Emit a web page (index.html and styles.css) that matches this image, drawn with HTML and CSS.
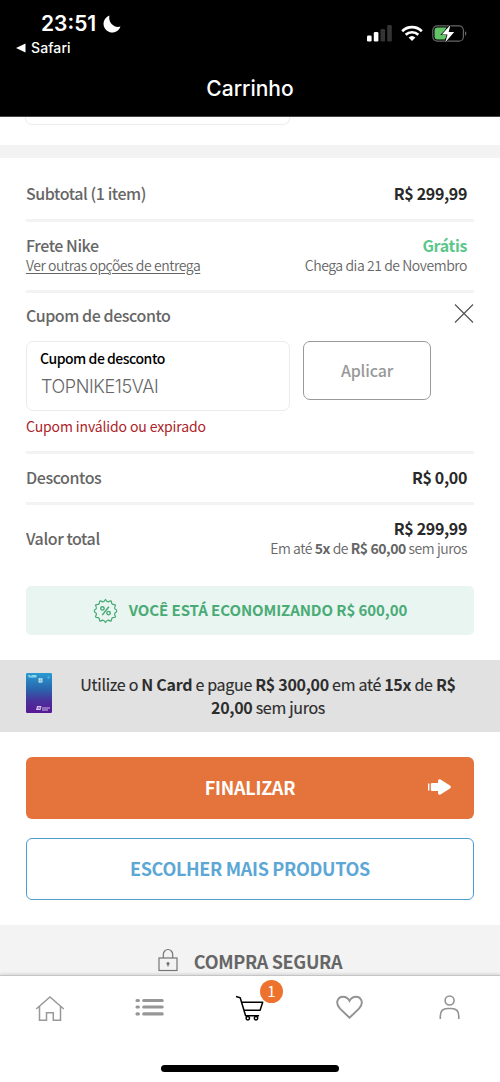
FILE: index.html
```html
<!DOCTYPE html>
<html lang="pt-BR">
<head>
<meta charset="utf-8">
<title>Carrinho</title>
<link rel="stylesheet" href="styles.css">
</head>
<body>
<div class="app">
  <header class="header">
    <div class="status">
      <div class="status-left">
        <div class="clock"><span class="time">23:51</span>
          <svg class="moon" width="18" height="18" viewBox="0 0 18 18"><path d="M6.500.5A8.700 8.700 0 1 0 17.500 11.500C11.500 13.500 4.800 8 6.500.5Z" fill="#fff"/></svg>
        </div>
        <div class="back"><svg width="10" height="10" viewBox="0 0 10 10"><path d="M0 5 9.500.5v9Z" fill="#fff"/></svg><span class="safari">Safari</span></div>
      </div>
      <div class="status-right">
        <svg width="26" height="17" viewBox="0 0 26 17"><g fill="#fff"><rect x="0" y="10.500" width="4.600" height="6" rx="1.300"/><rect x="6.800" y="7" width="4.600" height="9.500" rx="1.300"/></g><g fill="#343434"><rect x="13.500" y="4" width="4.600" height="12.500" rx="1.300"/><rect x="20.200" y="0" width="4.600" height="16.500" rx="1.300"/></g></svg>
        <svg class="wifi" width="22" height="17" viewBox="0 0 22 17" fill="none" stroke="#fff" stroke-width="2.700"><path d="M1.200 6.200a14 14 0 0 1 19.600 0"/><path d="M4.700 9.800a9 9 0 0 1 12.600 0"/><path d="M7.600 12.600a5 5 0 0 1 6.800 0L11 16Z" fill="#fff" stroke="none"/></svg>
        <svg class="battery" width="36" height="18" viewBox="0 0 36 18"><rect x=".8" y=".8" width="30.600" height="15.400" rx="4.500" fill="none" stroke="#666" stroke-width="1.200"/><path d="M5.500 2.500h9l-3 6.500h4L13 14.500H5.500a3 3 0 0 1-3-3v-6a3 3 0 0 1 3-3Z" fill="#62c466"/><path d="M33 6q2.800 2.500 0 5Z" fill="#666"/><path d="M18.400 0 9.800 9.500h5.700l-2.300 8 9-10.500h-5.500Z" fill="#fff" stroke="#000" stroke-width="1.200" paint-order="stroke"/></svg>
      </div>
    </div>
    <h1 class="title"><span>Carrinho</span></h1>
  </header>

  <main class="content">
    <div class="previous"><div class="previous-field"></div></div>
    <div class="band"></div>
    <section class="summary">
      <div class="row subtotal"><span class="label">Subtotal (1 item)</span><span class="price">R$ 299,99</span></div>
      <div class="row shipping">
        <div class="stack"><span class="label">Frete Nike</span><a class="small link">Ver outras opções de entrega</a></div>
        <div class="stack end"><span class="price free">Grátis</span><span class="small">Chega dia 21 de Novembro</span></div>
      </div>
      <div class="coupon">
        <div class="coupon-head"><span class="label">Cupom de desconto</span>
          <svg width="20" height="20" viewBox="0 0 20 20" stroke="#505050" stroke-width="1.100"><path d="m1 1.500 18 18M19 1.500 1 19.500"/></svg></div>
        <div class="coupon-form">
          <div class="field"><span class="field-label">Cupom de desconto</span><span class="field-value">TOPNIKE15VAI</span></div>
          <div class="apply"><span>Aplicar</span></div>
        </div>
        <div class="error"><span>Cupom inválido ou expirado</span></div>
      </div>
      <div class="row discounts"><span class="label">Descontos</span><span class="price">R$ 0,00</span></div>
      <div class="row total">
        <span class="label">Valor total</span>
        <div class="stack end"><span class="price">R$ 299,99</span><span class="small">Em até <b>5x</b> de <b>R$ 60,00</b> sem juros</span></div>
      </div>
      <div class="saving">
        <svg width="25" height="26" viewBox="0 0 26 26" fill="none" stroke="#4aab76" stroke-width="1.300" stroke-linejoin="round"><path d="M13 1 Q14.500 3.700 16 3.500 Q17.600 2.400 19 2.600 Q19.200 5.600 20.400 6.100 Q22.600 6 23.400 7 Q22 9.600 22.600 10.700 Q24.700 11.800 24.700 13 Q24.700 14.200 22.600 15.300 Q22 16.400 23.400 19 Q22.600 20 20.400 19.900 Q19.200 20.400 19 23.400 Q17.600 23.600 16 22.500 Q14.500 22.300 13 25 Q11.500 22.300 10 22.500 Q8.400 23.600 7 23.400 Q6.800 20.400 5.600 19.900 Q3.400 20 2.600 19 Q4 16.400 3.400 15.300 Q1.300 14.200 1.300 13 Q1.300 11.800 3.400 10.700 Q4 9.600 2.600 7 Q3.400 6 5.600 6.100 Q6.800 5.600 7 2.600 Q8.400 2.400 10 3.500 Q11.500 3.700 13 1Z"/><circle cx="9.800" cy="10.300" r="1.800" stroke-width="1.500"/><circle cx="16.200" cy="15.200" r="1.800" stroke-width="1.500"/><path d="M16.500 8.500 9.600 17.300" stroke-width="1.600"/></svg>
        <span class="saving-text">VOCÊ ESTÁ ECONOMIZANDO R$ 600,00</span>
      </div>
    </section>

    <section class="ncard">
      <svg width="26" height="40" viewBox="0 0 26 40"><defs><linearGradient id="card" x1="0" y1="0" x2="0" y2="1"><stop offset="0" stop-color="#299bd2"/><stop offset=".4" stop-color="#2866ad"/><stop offset=".7" stop-color="#49319b"/><stop offset="1" stop-color="#581795"/></linearGradient></defs><rect width="26" height="40" rx="1.200" fill="url(#card)"/><path d="M2 2h2l.7 1.600L6 2h4.500v2.500H3Z" fill="#8bd3eb"/><rect x="12.500" y="5" width="4" height="4.800" rx=".8" fill="#b9deea"/><path d="M14.500 5v4.800M12.500 7.400h4" stroke="#6bafcf" stroke-width=".5"/><path d="M22.500 3v3M21 4.500h3" stroke="#55b5de" stroke-width=".8"/><path d="m11 33-1 4h4.500l1-4Z" fill="#d5c5e8"/><path d="m12 36 .5-2 1 2 .5-2" stroke="#5a279b" stroke-width=".5" fill="none"/><path d="M16 35h8M16 37h6" stroke="#a786ca" stroke-width="1.300"/></svg>
      <p class="ncard-text"><span>Utilize o <b>N Card</b> e pague <b>R$ 300,00</b> em até <b>15x</b> de <b>R$</b></span><span><b>20,00</b> sem juros</span></p>
    </section>

    <div class="actions">
      <div class="button primary"><span class="finish">FINALIZAR</span>
        <svg class="arrow" width="24" height="16" viewBox="0 0 24 16" fill="#fff"><rect x="0" y="4.500" width="1.400" height="7"/><path d="M4 4h6V2Q10.200-.3 12.500.6L22 6.600q1.800 1.400 0 2.800l-9.500 6Q10.200 16.300 10 14v-2H4q-1.200 0-1.200-1.200V5.200Q2.800 4 4 4Z"/></svg></div>
      <div class="button outline"><span>ESCOLHER MAIS PRODUTOS</span></div>
    </div>
    <section class="secure">
      <svg width="20" height="24" viewBox="0 0 20 24" fill="none" stroke="#757575" stroke-width="1.200"><rect x="1" y="10" width="18" height="12.500"/><path d="M5.300 10V6.500a4.700 5 0 0 1 9.400 0V10"/><circle cx="10" cy="15.500" r="1" fill="#666"/><path d="M10 15.500v3"/></svg>
      <span class="secure-text">COMPRA SEGURA</span>
    </section>
  </main>

  <nav class="nav">
    <div class="tabs">
      <div class="tab"><svg width="30" height="28" viewBox="0 0 30 28" fill="none" stroke="#999" stroke-width="1.500"><path d="M1.200 15 15 3l13.800 12M4.500 12.200v14h7V18.700h6.800v7.500h7.200v-14"/></svg></div>
      <div class="tab"><svg width="30" height="28" viewBox="0 0 30 28" stroke="#969696" stroke-width="3.100" stroke-linecap="round"><path d="M2 6.500h1.400M8.700 6.500h18.500M2 13h1.400M8.700 13h18.500M2 19.900h1.400M8.700 19.900h18.500"/></svg></div>
      <div class="tab cart"><svg width="30" height="28" viewBox="0 0 30 28" fill="none" stroke="#000" stroke-width="1.500" stroke-linejoin="round"><path d="M1 2.500 5.200 3.700l5.400 18h13.500M6.700 8.200H27.700l-2.600 8H9"/><circle cx="12.800" cy="24.200" r="1.700"/><circle cx="21" cy="24.200" r="1.700"/></svg><span class="badge">1</span></div>
      <div class="tab"><svg width="30" height="28" viewBox="0 0 30 28" fill="none" stroke="#929292" stroke-width="1.900"><path d="M14.500 23.800 5 14.700C-.8 8.200 3.500 2.700 8 2.700c2.800 0 5.200 1.600 6.500 4.200 1.300-2.600 3.500-4.200 6.500-4.200 4.500 0 8.800 5.500 3 12Z"/></svg></div>
      <div class="tab"><svg width="30" height="28" viewBox="0 0 30 28" fill="none" stroke="#929292" stroke-width="1.600"><circle cx="14.600" cy="6.500" r="4.500"/><path d="M5.300 25v-3q0-7.500 7.500-7.500h3.500q7.500 0 7.500 7.500v3"/></svg></div>
    </div>
    <div class="home-indicator"></div>
  </nav>
</div>
</body>
</html>
```
FILE: styles.css
```css
* { box-sizing: border-box; }
body { margin: 0; background: #fff; font-family: "Noto Sans CJK JP", "Open Sans", sans-serif; color: #666; }
.app { width: 500px; height: 1082px; display: flex; flex-direction: column; overflow: hidden; }
svg { display: block; flex: none; }
span, a { white-space: nowrap; }
.header { height: 117px; flex: none; background: #000; color: #fff; font-family: Inter, sans-serif; border-bottom: 1px solid #444; }
.status { height: 66px; display: flex; justify-content: space-between; }
.clock { display: flex; align-items: center; height: 24px; margin: 12px 0 0 41px; gap: 7px; }
.time { font-size: 21px; font-weight: 600; line-height: 24px; }
.back { display: flex; align-items: center; gap: 5px; height: 18px; margin: 3px 0 0 16px; }
.safari { font-size: 14px; font-weight: 500; line-height: 18px; letter-spacing: .1px; }
.status-right { display: flex; padding: 25px 32px 0 0; }
.wifi { margin-left: 8px; }
.battery { margin-left: 9px; }
.title { margin: 0; padding-top: 9px; font-size: 21px; line-height: 28px; font-weight: 500; text-align: center; }

.content { height: 858px; flex: none; overflow: hidden; }
.previous { height: 28px; padding-left: 25px; }
.previous-field { width: 265px; height: 8px; border: 1px solid #ededed; border-top: 0; border-radius: 0 0 7px 7px; }
.band { height: 13px; background: #f3f3f3; }
.summary { padding: 0 26px; height: 502px; }
.row { display: flex; justify-content: space-between; align-items: center; padding-right: 7px; border-bottom: 3px solid #f3f3f3; }
.stack { display: flex; flex-direction: column; align-items: flex-start; }
.end { align-items: flex-end; }
.label, .price { font-size: 16px; line-height: 22px; font-weight: 500; letter-spacing: -.43px; }
.price { font-weight: 700; color: #292929; letter-spacing: -.35px; }
.small { font-size: 14px; line-height: 19px; font-weight: 350; letter-spacing: -.44px; }
.small b { font-weight: 700; }
.link { text-decoration: underline; text-underline-offset: 2px; }
.price.free { color: #5bc78b; }
.subtotal { height: 64px; padding-bottom: 15px; align-items: flex-end; }
.shipping { height: 71px; padding-bottom: 4px; }
.coupon { height: 161px; border-bottom: 3px solid #f3f3f3; }
.coupon-head { display: flex; height: 48px; justify-content: space-between; padding-top: 10px; }
.coupon-head .label { padding-top: 1px; }
.coupon-form { display: flex; gap: 13px; height: 70px; }
.field { width: 264px; height: 70px; border: 1px solid #ebebeb; border-radius: 7px; display: flex; flex-direction: column; align-items: flex-start; padding: 6px 13px; }
.field-label { font-size: 14px; line-height: 20px; color: #000; font-weight: 500; letter-spacing: -.47px; }
.field-value { font-family: Inter, sans-serif; font-size: 18px; line-height: 24px; margin: 7px 0 0 1px; font-weight: 350; letter-spacing: -.4px; }
.apply { width: 128px; height: 59px; border: 1px solid #999; border-radius: 7px; display: flex; align-items: center; justify-content: center; color: #999; font-size: 16px; font-weight: 500; letter-spacing: -.15px; padding-bottom: 2px; }
.error { color: #ad2329; font-size: 14px; line-height: 20px; padding-top: 5px; letter-spacing: -.13px; }
.discounts { height: 51px; padding-bottom: 2px; }
.total { height: 68px; border: 0; padding-bottom: 3px; }
.saving { height: 49px; margin-top: 13px; border-radius: 5px; background: #e8f5f0; display: flex; align-items: center; justify-content: center; gap: 11px; }
.saving-text { color: #4aab76; font-size: 15px; font-weight: 700; line-height: 22px; letter-spacing: -.08px; padding-bottom: 1px; }
.ncard { height: 72px; background: #e1e1e1; display: flex; align-items: flex-start; padding: 13px 26px; color: #2d2d2d; }
.ncard-text { margin: 0 0 0 25px; width: 382px; display: flex; flex-direction: column; align-items: center; font-size: 16px; line-height: 23px; font-weight: 400; letter-spacing: -.31px; -webkit-text-stroke: .15px currentColor; }
.ncard-text b { -webkit-text-stroke: 0; }
.actions { padding: 25px 26px 0; display: flex; flex-direction: column; gap: 19px; height: 193px; }
.button { height: 62px; border-radius: 6px; display: flex; align-items: center; justify-content: center; font-size: 18px; font-weight: 700; position: relative; flex: none; padding-bottom: 2px; letter-spacing: -.32px; }
.finish { letter-spacing: -.25px; }
.primary { background: #e5743c; color: #fff; }
.arrow { position: absolute; right: 22px; top: 22px; }
.outline { border: 1px solid #4e9dcc; color: #5ca7d5; }
.secure { height: 50px; background: #f3f3f3; display: flex; justify-content: center; align-items: flex-start; gap: 16px; padding-top: 23px; }
.secure-text { font-size: 18px; line-height: 26px; font-weight: 700; letter-spacing: -.32px; }
.nav { position: relative; height: 107px; flex: none; background: #fff; border-top: 1px solid #c5c5c5; box-shadow: 0 -1px 3px #0002; }
.tabs { display: grid; grid-template-columns: repeat(5, 1fr); height: 89px; padding-top: 18px; }
.tab { display: flex; justify-content: center; align-items: flex-start; position: relative; }
.badge { position: absolute; left: 60px; top: -14px; width: 23px; height: 23px; border-radius: 50%; background: #ed722e; color: #fff; text-align: center; font: 400 15px/21px "Noto Sans CJK JP", sans-serif; }
.home-indicator { width: 178px; height: 7px; border-radius: 4px; background: #000; margin: 0 auto; }
```
